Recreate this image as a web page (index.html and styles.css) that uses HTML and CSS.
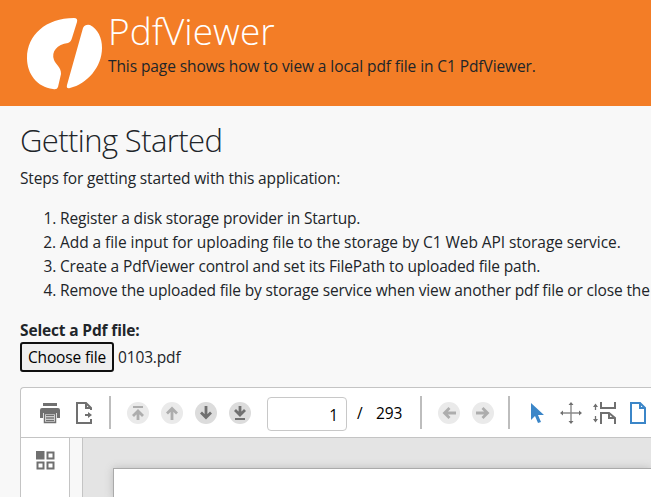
FILE: index.html
```html
<!DOCTYPE html>
<html lang="en">
<head>
<meta charset="utf-8">
<title>PdfViewer</title>
<link rel="stylesheet" href="styles.css">
</head>
<body>
<header class="header">
  <svg class="logo" width="78" height="74" viewBox="0 0 78 74"><path fill="#fff" d="M48 0Q52 0 51 4L46 20Q45 24 42 25C31 26 25 34 28 42C30 47 35 49 35 56L32 69Q31 72 27 71C11 69 1 56 1 40C1 17 20 0 48 0ZM57 10Q59 6 64 7C72 11 76 20 76 30C76 49 61 66 44 70Q40 71 41 67Z"/></svg>
  <div>
    <h1 class="title">PdfViewer</h1>
    <p class="subtitle">This page shows how to view a local pdf file in C1 PdfViewer.</p>
  </div>
</header>
<main class="content">
  <h2 class="heading">Getting Started</h2>
  <p class="intro">Steps for getting started with this application:</p>
  <ol class="steps">
    <li>Register a disk storage provider in Startup.</li>
    <li class="step-upload">Add a file input for uploading file to the storage by C1 Web API storage service.</li>
    <li>Create a PdfViewer control and set its FilePath to uploaded file path.</li>
    <li>Remove the uploaded file by storage service when view another pdf file or close the</li>
  </ol>
  <div class="label">Select a Pdf file:</div>
  <div class="file"><button class="choose">Choose file</button><span>0103.pdf</span></div>
  <section class="viewer">
    <div class="toolbar">
      <svg class="print" width="22" height="22" viewBox="0 0 22 22"><path fill="#707070" d="M4 1h14v3H4zM3 6h16q2 0 2 2v8h-3v-5H4v5H1V8q0-2 2-2z"/><path fill="#eee" stroke="#707070" stroke-width="1.5" d="M5.500 11.500h11v9h-11z"/><path stroke="#707070" stroke-width="1.300" d="M7 13.500h8M7 16h8M7 18.500h8"/></svg>
      <svg class="export" width="18" height="22" viewBox="0 0 18 22"><path fill="none" stroke="#707070" stroke-width="2" d="M16 17v4H2V1h9l5 5v2M11 1v5h5"/><path fill="#707070" d="M10 12h3v-2l4 3-4 3v-2h-3z"/></svg>
      <i class="sep"></i>
      <svg class="round" viewBox="0 0 22 22"><circle cx="11" cy="11" r="11" fill="#eaeaea"/><path fill="none" stroke="#adadad" stroke-width="2" d="M6 5h10"/><path fill="none" stroke="#adadad" stroke-width="2.800" d="M11 18V9M6 14l5-5 5 5"/></svg>
      <svg class="round" viewBox="0 0 22 22"><circle cx="11" cy="11" r="11" fill="#eaeaea"/><path fill="none" stroke="#adadad" stroke-width="2.800" d="M11 18V6M6 11.500l5-5 5 5"/></svg>
      <svg class="round" viewBox="0 0 22 22"><circle cx="11" cy="11" r="11" fill="#dcdcdc"/><path fill="none" stroke="#707070" stroke-width="2.800" d="M11 4v12M6 10.500l5 5 5-5"/></svg>
      <svg class="round" viewBox="0 0 22 22"><circle cx="11" cy="11" r="11" fill="#dcdcdc"/><path fill="none" stroke="#707070" stroke-width="2" d="M6 17h10"/><path fill="none" stroke="#707070" stroke-width="2.800" d="M11 4v9M6 8l5 5 5-5"/></svg>
      <div class="page-number">1</div>
      <span class="slash">/</span><span class="total">293</span>
      <i class="sep sep-nav"></i>
      <svg class="round" viewBox="0 0 22 22"><circle cx="11" cy="11" r="11" fill="#eaeaea"/><path fill="none" stroke="#adadad" stroke-width="2.800" d="M18 11H6M11.500 6l-5 5 5 5"/></svg>
      <svg class="round" viewBox="0 0 22 22"><circle cx="11" cy="11" r="11" fill="#eaeaea"/><path fill="none" stroke="#adadad" stroke-width="2.800" d="M4 11h12M10.500 6l5 5-5 5"/></svg>
      <i class="sep sep-tools"></i>
      <svg class="pointer" width="14" height="22" viewBox="0 0 14 22"><path fill="#3b86c8" d="M1 1v17l4-4 3 7 3-1-3-7h6z"/></svg>
      <svg class="move" width="22" height="22" viewBox="0 0 22 22"><path fill="none" stroke="#8a8a8a" stroke-width="1.400" d="M11 2v18M2 11h18"/><path fill="#707070" d="M11 0l2.500 3h-5zM11 22l2.500-3h-5zM0 11l3-2.500v5zM22 11l-3-2.500v5z"/></svg>
      <svg class="continuous" width="23" height="22" viewBox="0 0 23 22"><path fill="none" stroke="#707070" stroke-width="2" d="M8 0v6h14V0M8 22V11h8l6 5v6M16 11v5h6"/><path fill="none" stroke="#707070" stroke-width="1.300" d="M2.500 8V3M2.500 14v5"/><path fill="#707070" d="M2.500 1.500l2.500 3.500h-5zM2.500 20.500l2.500-3.500h-5z"/></svg>
      <svg class="single" width="16" height="22" viewBox="0 0 16 22"><path fill="none" stroke="#3b86c8" stroke-width="2" d="M1 1h9l5 5v15H1zM10 1v5h5"/></svg>
    </div>
    <div class="body">
      <div class="rail"><svg width="19" height="19" viewBox="0 0 19 19"><path fill="#707070" d="M0 0h8.500v8.500H0z"/><path fill="none" stroke="#707070" stroke-width="2" d="M11.500 1.500h6v6h-6zM1.500 11.500h6v6h-6zM11.500 11.500h6v6h-6z"/></svg></div>
      <div class="splitter"></div>
      <div class="canvas"><div class="page"></div></div>
    </div>
  </section>
</main>
</body>
</html>
```
FILE: styles.css
```css
* { box-sizing: border-box; }
body { margin: 0; height: 497px; overflow: hidden; background: #f8f8f8; color: #212529; font: 15.5px/24px "Open Sans", sans-serif; letter-spacing: -.15px; white-space: nowrap; }
h1, h2, p, ol { margin: 0; font-weight: 400; }
.header { display: flex; height: 106px; background: #f37d26; padding: 12px 0 0 26px; }
.logo { margin: 6px 4px 0 0; flex: none; }
.title { color: #fff; font-size: 37px; line-height: 38px; font-weight: 300; letter-spacing: .05px; }
.subtitle { margin-top: 4px; letter-spacing: -.09px; }
.content { padding: 15px 0 0 20px; }
.heading { font-size: 31px; line-height: 38px; font-weight: 300; letter-spacing: -.6px; }
.intro { margin-top: 7px; }
.steps { margin: 16px 0; padding-left: 40px; }
.step-upload { letter-spacing: -.06px; }
.label { font-weight: 700; }
.file { display: flex; height: 30px; align-items: center; gap: 4px; }
.choose { width: 94px; height: 30px; padding: 0; border: 2px solid #101010; border-radius: 3px; background: #efefef; color: #000; font: inherit; letter-spacing: inherit; }
.viewer { height: 111px; margin-top: 15px; border: 1px solid #c4c4c4; border-width: 1px 0 0 1px; border-radius: 4px 0 0; background: #fff; overflow: hidden; }
.toolbar { display: flex; align-items: center; height: 50px; border-bottom: 1px solid #c4c4c4; padding-left: 18px; color: #000; }
.toolbar > * { flex: none; }
.export { margin-left: 14px; }
.sep { width: 2px; height: 33px; margin: 0 4px 0 16px; background: #bdbdbd; }
.round { width: 22px; height: 22px; margin-left: 12px; }
.page-number { width: 80px; height: 34px; margin: 3px 10px 0 16px; padding-right: 8px; border: 1px solid #c8c8c8; border-radius: 4px; text-align: right; line-height: 34px; }
.slash { width: 19px; }
.total { width: 44px; }
.sep-nav { margin: 0 4px 0 0; }
.sep-tools { margin: 0 20px 0 14px; }
.move { margin-left: 16px; }
.continuous { margin-left: 11px; }
.single { margin-left: 14px; }
.body { display: flex; height: 60px; }
.rail { width: 49px; border-right: 1px solid #c4c4c4; padding: 13px 0 0 15px; }
.splitter { width: 13px; background: #f8f8f8; border-right: 1px solid #c4c4c4; }
.canvas { flex: 1; background: #e4e4e4; padding: 30px 0 0 30px; overflow: hidden; }
.page { height: 30px; background: #fff; border: 1px solid #aaa; border-width: 1px 0 0 1px; box-shadow: 0 0 8px #bbb; }
```
